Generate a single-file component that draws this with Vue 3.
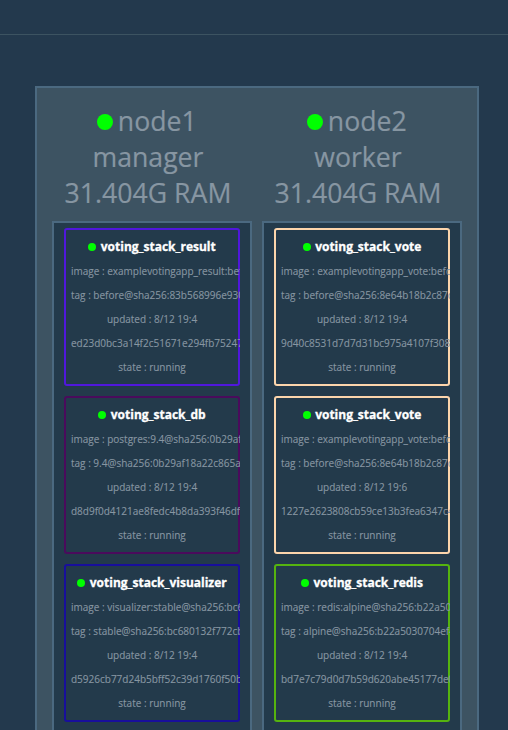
<script setup>
const nodes = [
  {
    name: 'node1', role: 'manager', ram: '31.404G RAM',
    tasks: [
      { color: '#5017dc', name: 'voting_stack_result', image: 'examplevotingapp_result:before', tag: 'before@sha256:83b568996e930c29', updated: '8/12 19:4', id: 'ed23d0bc3a14f2c51671e294fb75247a' },
      { color: '#4a0b5c', name: 'voting_stack_db', image: 'postgres:9.4@sha256:0b29af18a2', tag: '9.4@sha256:0b29af18a22c865a6e', updated: '8/12 19:4', id: 'd8d9f0d4121ae8fedc4b8da393f46dfa' },
      { color: '#180f9c', name: 'voting_stack_visualizer', image: 'visualizer:stable@sha256:bc680132', tag: 'stable@sha256:bc680132f772cb44', updated: '8/12 19:4', id: 'd5926cb77d24b5bff52c39d1760f50b8' },
    ],
  },
  {
    name: 'node2', role: 'worker', ram: '31.404G RAM',
    tasks: [
      { color: '#fcd5ac', name: 'voting_stack_vote', image: 'examplevotingapp_vote:before', tag: 'before@sha256:8e64b18b2c87de90', updated: '8/12 19:4', id: '9d40c8531d7d7d31bc975a4107f3084e' },
      { color: '#fcd5ac', name: 'voting_stack_vote', image: 'examplevotingapp_vote:before', tag: 'before@sha256:8e64b18b2c87de90', updated: '8/12 19:6', id: '1227e2623808cb59ce13b3fea6347c4e' },
      { color: '#55b30f', name: 'voting_stack_redis', image: 'redis:alpine@sha256:b22a5030704e', tag: 'alpine@sha256:b22a5030704ef4a2', updated: '8/12 19:4', id: 'bd7e7c79d0d7b59d620abe45177de0a1' },
    ],
  },
]
</script>

<template>
  <div class="page">
    <header class="bar"></header>
    <main class="cluster">
      <section v-for="node in nodes" :key="node.name" class="node">
        <div class="node-head">
          <div class="line name"><i class="dot big"></i>{{ node.name }}</div>
          <div class="line">{{ node.role }}</div>
          <div class="line">{{ node.ram }}</div>
        </div>
        <div class="tasks">
          <article v-for="(task, i) in node.tasks" :key="i" class="task" :style="{ '--service': task.color }">
            <div class="title"><i class="dot"></i>{{ task.name }}</div>
            <div class="row">image : {{ task.image }}</div>
            <div class="row">tag : {{ task.tag }}</div>
            <div class="row">updated : {{ task.updated }}</div>
            <div class="row">{{ task.id }}</div>
            <div class="row">state : running</div>
          </article>
        </div>
      </section>
    </main>
  </div>
</template>

<style>
body {
  background: #23394d;
}
</style>

<style scoped>
.page {
  box-sizing: border-box;
  height: 730px;
  overflow: hidden;
  font-family: "Open Sans", sans-serif;
  color: #8796a2;
}
.bar {
  height: 34px;
  border-bottom: 1px solid #3c5361;
}
.cluster {
  box-sizing: border-box;
  display: flex;
  gap: 10px;
  width: 444px;
  height: 800px;
  margin: 51px 0 0 35px;
  padding: 15px;
  border: 2px solid #4b6980;
  background: #3d5362;
}
.node {
  display: flex;
  flex-direction: column;
  width: 200px;
}
.node-head {
  box-sizing: border-box;
  height: 118px;
  margin: -1px 8px 1px 0;
  text-align: center;
  font-size: 26.67px;
  -webkit-text-stroke: 0.2px currentColor;
}
.line {
  display: flex;
  align-items: center;
  justify-content: center;
  height: 36px;
  white-space: nowrap;
}
.line.name {
  padding-right: 2px;
}
.tasks {
  display: flex;
  flex: 1;
  flex-direction: column;
  gap: 10px;
  padding: 5px 10px;
  border: 2px solid #4b6980;
  background: #233a4b;
}
.task {
  box-sizing: border-box;
  flex: none;
  width: 176px;
  height: 158px;
  padding: 7px;
  overflow: hidden;
  border-radius: 3px;
  box-shadow: inset 0 0 0 2px var(--service);
  text-align: center;
  font-size: 10px;
  -webkit-text-stroke: 0.12px currentColor;
}
.title,
.row {
  height: 24px;
  line-height: 24px;
  white-space: nowrap;
}
.title {
  display: flex;
  align-items: center;
  justify-content: center;
  color: #fff;
  font-size: 12px;
  font-weight: 700;
  -webkit-text-stroke: 0.3px currentColor;
}
.dot {
  flex: none;
  width: 8px;
  height: 8px;
  margin-right: 4.5px;
  border-radius: 50%;
  background: #0f0;
}
.dot.big {
  width: 16px;
  height: 16px;
  margin-top: 4px;
}
</style>
